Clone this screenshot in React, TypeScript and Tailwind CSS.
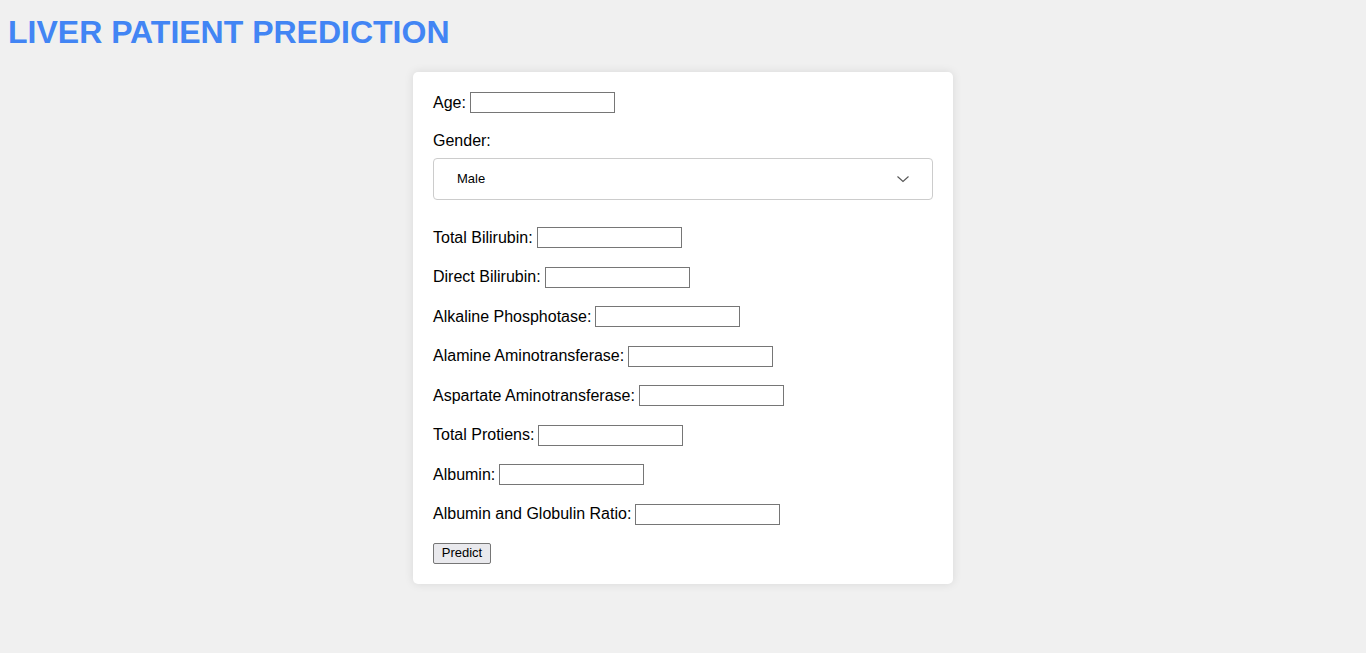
import React from "react";

const fields = [
  "Total Bilirubin:",
  "Direct Bilirubin:",
  "Alkaline Phosphotase:",
  "Alamine Aminotransferase:",
  "Aspartate Aminotransferase:",
  "Total Protiens:",
  "Albumin:",
  "Albumin and Globulin Ratio:",
];

function Row({ label }: { label: string }) {
  return (
    <div className="flex items-center h-[21px] text-[16px] text-black">
      <span>{label}</span>
      <input
        type="text"
        className="ml-[4px] w-[145px] h-[21px] border border-[#767676] bg-white outline-none"
      />
    </div>
  );
}

export default function App() {
  return (
    <div
      className="min-h-[653px] w-full bg-[#f0f0f0] px-[8px] pt-[14px] pb-[40px]"
      style={{ fontFamily: '"Liberation Sans", Arial, sans-serif' }}
    >
      <h1 className="text-[32px] leading-[37px] font-bold text-[#4285f4] mb-[21px]">
        LIVER PATIENT PREDICTION
      </h1>
      <div className="mx-auto w-[540px] bg-white rounded-[5px] shadow-[0_0_10px_rgba(0,0,0,0.1)] p-[20px]">
        <Row label="Age:" />
        <div className="mt-[19px] h-[18px] leading-[18px] text-[16px] text-black">Gender:</div>
        <div className="mt-[8px] h-[42px] w-[500px] border border-[#cccccc] rounded-[4px] flex items-center justify-between pl-[23px] pr-[22px] text-[13px] text-black">
          <span>Male</span>
          <svg width="14" height="14" viewBox="0 0 14 14" fill="none">
            <path d="M1.5 4.5 L7 9.5 L12.5 4.5" stroke="#555" strokeWidth="1.1" />
          </svg>
        </div>
        <div className="mt-[27px] flex flex-col gap-[18.5px]">
          {fields.map((f) => (
            <Row key={f} label={f} />
          ))}
        </div>
        <button className="mt-[18px] h-[21px] w-[58px] border border-[#767676] bg-[#e9e9ed] text-[13px] text-black rounded-[2px] flex items-center justify-center">
          Predict
        </button>
      </div>
    </div>
  );
}
